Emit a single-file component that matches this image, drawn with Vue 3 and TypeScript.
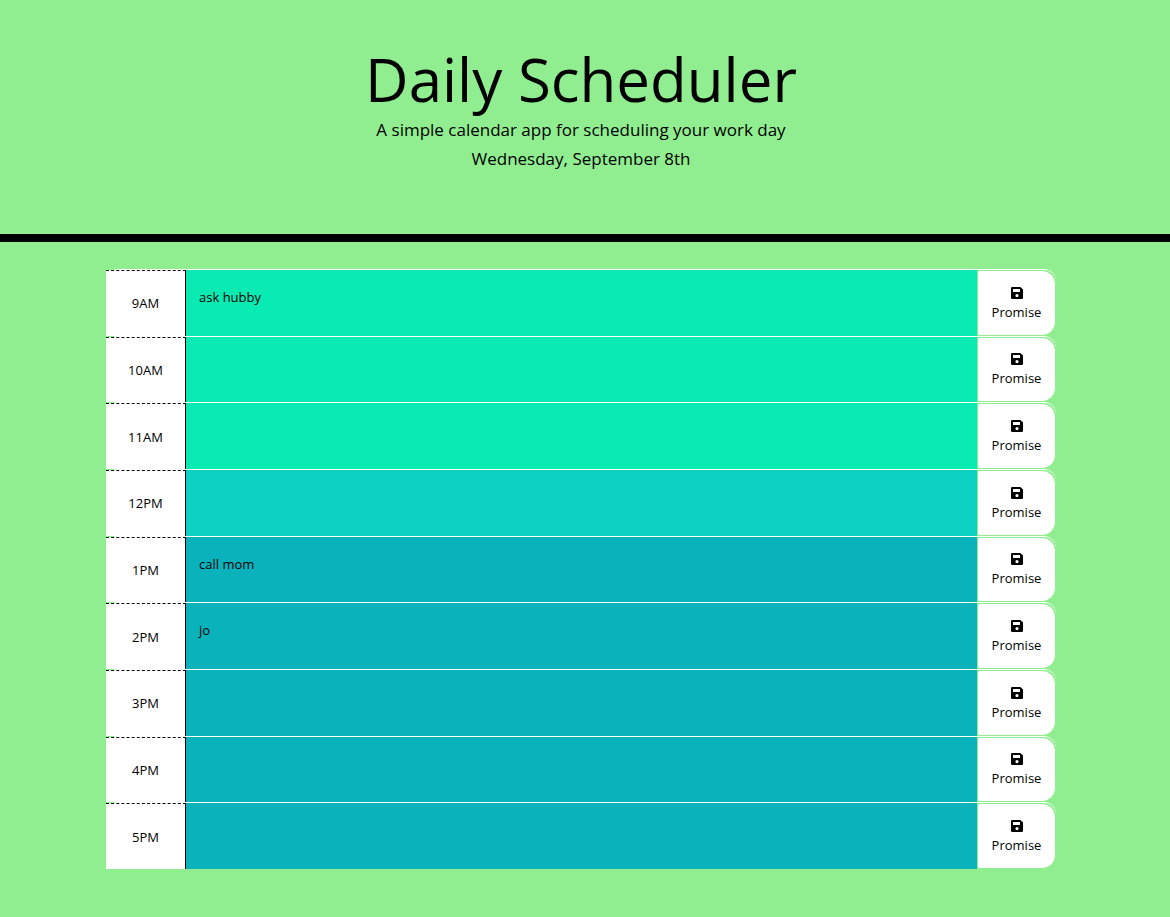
<script setup lang="ts">
import { reactive } from 'vue'

type Phase = 'past' | 'present' | 'future'

interface Slot {
  hour: string
  phase: Phase
  text: string
}

const slots = reactive<Slot[]>([
  { hour: '9AM', phase: 'past', text: 'ask hubby' },
  { hour: '10AM', phase: 'past', text: '' },
  { hour: '11AM', phase: 'past', text: '' },
  { hour: '12PM', phase: 'present', text: '' },
  { hour: '1PM', phase: 'future', text: 'call mom' },
  { hour: '2PM', phase: 'future', text: 'jo' },
  { hour: '3PM', phase: 'future', text: '' },
  { hour: '4PM', phase: 'future', text: '' },
  { hour: '5PM', phase: 'future', text: '' },
])
</script>

<template>
  <div class="page">
    <header class="header">
      <h1 class="title">Daily Scheduler</h1>
      <p class="lead">A simple calendar app for scheduling your work day</p>
      <p class="lead">Wednesday, September 8th</p>
    </header>
    <main class="schedule">
      <form v-for="slot in slots" :key="slot.hour" class="row" @submit.prevent>
        <label class="hour" :for="`slot-${slot.hour}`">{{ slot.hour }}</label>
        <textarea
          :id="`slot-${slot.hour}`"
          v-model="slot.text"
          class="entry"
          :class="slot.phase"
          rows="1"
          spellcheck="false"
        ></textarea>
        <button class="save" type="submit">
          <svg class="icon" viewBox="0 0 12 12" aria-hidden="true">
            <path
              fill-rule="evenodd"
              d="M1.2 0H9.4L12 2.6V10.8Q12 12 10.8 12H1.2Q0 12 0 10.8V1.2Q0 0 1.2 0ZM2 2V5H9V2ZM6 7A1.6 1.6 0 1 0 6 10.2A1.6 1.6 0 1 0 6 7Z"
            />
          </svg>
          <span>Promise</span>
        </button>
      </form>
    </main>
  </div>
</template>

<style>
body {
  margin: 0;
  background: #90ee90;
}
</style>

<style scoped>
.page {
  font-family: "Open Sans", "Noto Sans", sans-serif;
  color: #000;
}

.header {
  padding: 43px 8px 61px 0;
  border-bottom: 8px solid #000;
  text-align: center;
}

.title {
  margin: 0;
  font-size: 60px;
  font-weight: 400;
  line-height: 72px;
}

.lead {
  margin: 0;
  font-size: 17px;
  font-weight: 400;
  line-height: 29px;
}

.schedule {
  display: grid;
  grid-auto-rows: 1fr;
  min-height: 600px;
  padding: 27px 114px 48px 106px;
}

.row {
  display: grid;
  grid-template-columns: 80px 1fr 79px;
  border-top: 1px solid #fff;
  border-radius: 12px;
  font-size: 13px;
  font-weight: 400;
}

.hour {
  display: flex;
  align-items: center;
  justify-content: center;
  border-top: 1px dashed #000;
  border-right: 1px solid #000;
  background: #fff;
  line-height: 20px;
}

.entry {
  box-sizing: border-box;
  width: 100%;
  height: 100%;
  min-width: 0;
  padding: 17px 13px;
  border: 0;
  border-radius: 0;
  outline: 0;
  resize: none;
  overflow: hidden;
  color: #000;
  font: inherit;
  line-height: 20px;
}

.past {
  background: #0aebb4;
}

.present {
  background: #0cd0c1;
}

.future {
  background: #0ab3bc;
}

.save {
  display: flex;
  flex-direction: column;
  align-items: center;
  justify-content: center;
  gap: 3px;
  padding: 3px 0 0;
  border: 1px solid #90ee90;
  border-radius: 3px 14px 14px 3px;
  background: #fff;
  color: #000;
  font: inherit;
  line-height: 20px;
  cursor: pointer;
}

.icon {
  width: 12px;
  height: 12px;
  fill: currentColor;
}
</style>
